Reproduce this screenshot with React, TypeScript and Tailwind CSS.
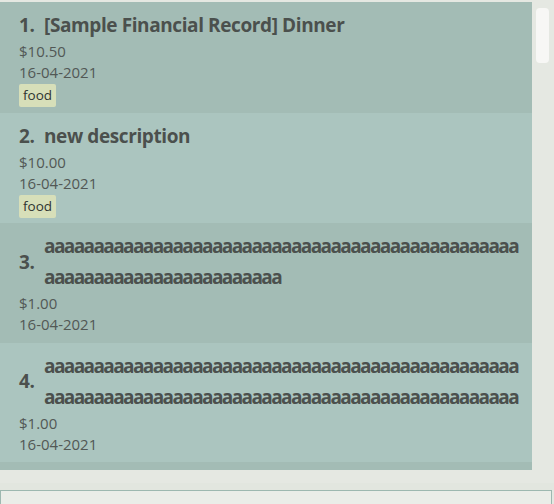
const records = [
  { id: 1, title: "[Sample Financial Record] Dinner", amount: "$10.50", date: "16-04-2021", tags: ["food"] },
  { id: 2, title: "new description", amount: "$10.00", date: "16-04-2021", tags: ["food"] },
  { id: 3, title: "a".repeat(72), amount: "$1.00", date: "16-04-2021", tags: [] },
  { id: 4, title: "a".repeat(96), amount: "$1.00", date: "16-04-2021", tags: [] },
  { id: 5, title: "lunch", amount: "$5.00", date: "16-04-2021", tags: [] },
];

function RecordCard({ record, index }: { record: (typeof records)[number]; index: number }) {
  const even = index % 2 === 1;
  // long unbroken titles pack tighter, like the reference's narrow bold "a"
  const long = record.title.length > 40;
  return (
    <div
      className={`pl-[19px] pr-[10px] pt-[8px] ${record.tags.length ? "pb-[5.5px]" : "pb-[7.5px]"} ${
        even ? "bg-[#abc5bf]" : "bg-[#a3bcb5]"
      }`}
    >
      <div className="flex items-center text-[19px] font-bold leading-[31px] text-[#4b504d]">
        <span className="w-[25px] shrink-0 tracking-[-0.4px]">{record.id}.</span>
        <span className={`break-all ${long ? "tracking-[-1.6px]" : "tracking-[-0.4px]"}`}>{record.title}</span>
      </div>
      <div className="text-[15px] leading-[21px] text-[#525855]">{record.amount}</div>
      <div className="text-[15px] leading-[21px] text-[#525855]">{record.date}</div>
      {record.tags.length > 0 && (
        <div className="mt-[1px] flex gap-1">
          {record.tags.map((t) => (
            <span
              key={t}
              className="rounded-[2px] bg-[#d7dfb9] px-[4px] text-[13.5px] leading-[23px] text-[#2f3431]"
            >
              {t}
            </span>
          ))}
        </div>
      )}
    </div>
  );
}

export default function App() {
  return (
    <div
      className="h-[504px] w-[554px] overflow-hidden bg-[#e5e8e2] pt-[2px]"
      style={{ fontFamily: '"Open Sans", "Noto Sans", sans-serif' }}
    >
      <div className="flex h-[468px]">
        <div className="h-full w-[532px] overflow-hidden">
          {records.map((r, i) => (
            <RecordCard key={r.id} record={r} index={i} />
          ))}
        </div>
        <div className="flex-1 pl-[4px] pr-[5px] pt-[6px]">
          <div className="h-[55px] rounded-[4px] bg-[#f7f7f5]" />
        </div>
      </div>
      <div className="h-[13px]" />
      <div className="h-[7px] bg-[#e2e6df]" />
      <div className="mr-[2px] h-[20px] border border-[#9db8b0] bg-[#eaede8]" />
    </div>
  );
}
